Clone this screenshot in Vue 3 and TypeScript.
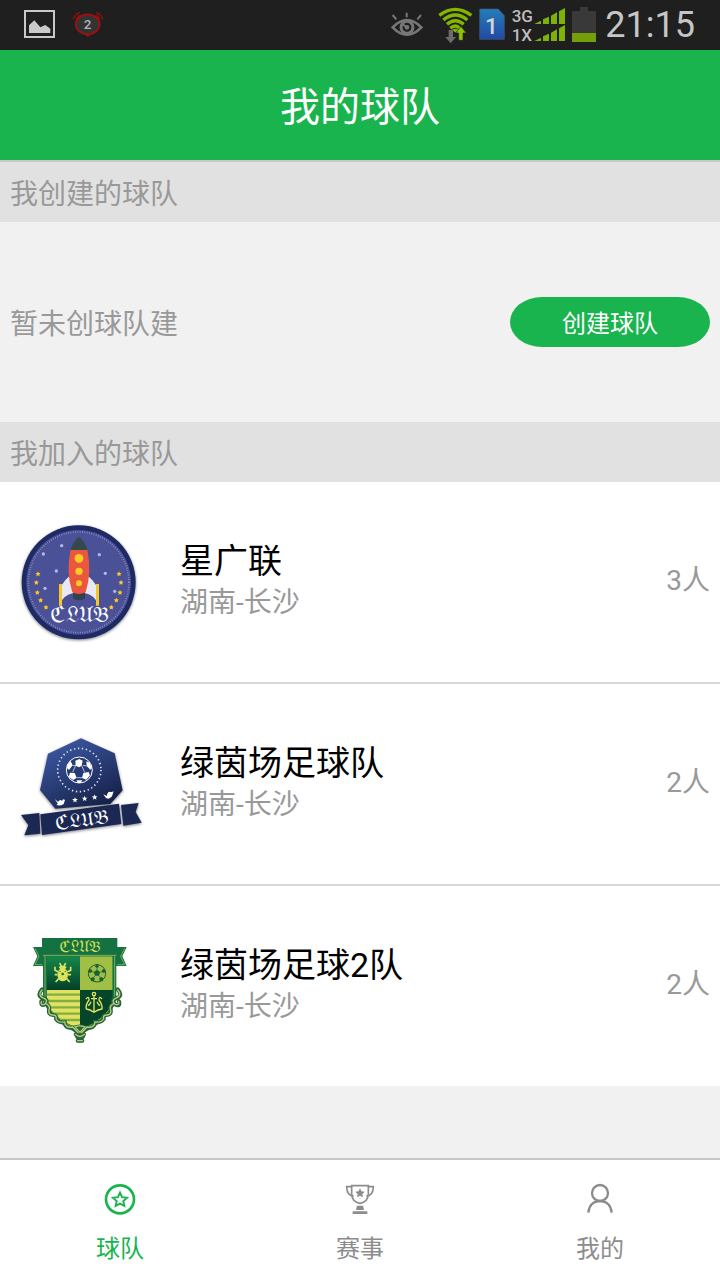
<script setup lang="ts">
import { ref } from 'vue'

interface Team {
  id: string
  name: string
  place: string
  members: number
}

const teams: Team[] = [
  { id: 'rocket', name: '星广联', place: '湖南-长沙', members: 3 },
  { id: 'heptagon', name: '绿茵场足球队', place: '湖南-长沙', members: 2 },
  { id: 'shield', name: '绿茵场足球2队', place: '湖南-长沙', members: 2 },
]

const tabs = [
  { id: 'team', label: '球队' },
  { id: 'match', label: '赛事' },
  { id: 'mine', label: '我的' },
]
const active = ref('team')

/** Five-pointed star as a polygon point list. */
function star(cx: number, cy: number, r: number, inner = 0.42): string {
  const pts: string[] = []
  for (let i = 0; i < 10; i++) {
    const a = ((i * 36 - 90) * Math.PI) / 180
    const d = i % 2 ? r * inner : r
    pts.push(`${(cx + d * Math.cos(a)).toFixed(1)},${(cy + d * Math.sin(a)).toFixed(1)}`)
  }
  return pts.join(' ')
}

/** Regular pentagon as a polygon point list. */
function pentagon(cx: number, cy: number, r: number, turn = 0): string {
  return [0, 1, 2, 3, 4]
    .map((i) => {
      const a = ((i * 72 - 90 + turn) * Math.PI) / 180
      return `${(cx + r * Math.cos(a)).toFixed(1)},${(cy + r * Math.sin(a)).toFixed(1)}`
    })
    .join(' ')
}

const rocketDots = [[155, 92], [100, 117], [268, 119], [139, 168], [286, 175], [105, 220], [314, 229]]
const rocketStars = [[84, 177], [79, 203], [82, 233], [92, 256], [108, 277], [327, 177], [333, 203], [330, 233], [319, 256], [304, 277]]
</script>

<template>
  <div class="page">
    <div class="status">
      <svg class="status-left" viewBox="60 0 260 150" aria-hidden="true">
        <rect x="75" y="33" width="87" height="78" fill="none" stroke="#c9c9c9" stroke-width="6" />
        <path d="M87 99V76L103 61L121 82L136 75L151 86V99Z" fill="#c9c9c9" />
        <ellipse cx="263" cy="73" rx="36" ry="30" fill="#333" stroke="#a90d0d" stroke-width="5" />
        <path d="M256 102L264 112L271 102Z" fill="#a90d0d" />
        <path d="M219 58Q226 43 239 37M289 37Q303 44 309 58M229 56L239 45M289 45L300 57" fill="none" stroke="#930f0f" stroke-width="4" />
        <text x="263" y="87" text-anchor="middle" font-size="40" font-weight="500" fill="#b5b5b5">2</text>
      </svg>
      <svg class="status-icons" viewBox="0 0 660 150" aria-hidden="true">
        <g fill="none" stroke="#777" stroke-width="6">
          <path d="M38 82Q81 38 124 82Q81 126 38 82Z" stroke-width="8" />
          <path d="M80 38V52M38 45L49 58M123 45L112 58" />
        </g>
        <circle cx="81" cy="82" r="18" fill="none" stroke="#777" stroke-width="9" />
        <path d="M66 71L80 82" stroke="#777" stroke-width="6" />
        <circle cx="81" cy="82" r="7" fill="#777" />
        <g fill="none" stroke="#84b600" stroke-width="10">
          <path d="M178 46Q226 10 274 46" />
          <path d="M190 60Q226 30 262 60" />
          <path d="M201 73Q226 51 251 73" />
          <path d="M211 85Q226 71 240 85" />
        </g>
        <path d="M217 89Q226 83 236 89L226 98Z" fill="#84b600" />
        <path d="M206 90H219V111H228L212 130L196 111H206Z" fill="#6c6c6c" />
        <path d="M236 121H249V99H259L243 79L227 99H236Z" fill="#8fc400" stroke="#1f1f1f" stroke-width="2" />
        <defs>
          <linearGradient id="sim" x1="0" y1="0" x2="0" y2="1">
            <stop offset="0" stop-color="#267db9" /><stop offset="1" stop-color="#2149a4" />
          </linearGradient>
        </defs>
        <path d="M299 27H355L373 47V118H299Z" fill="url(#sim)" stroke="#3d5b78" stroke-width="2" />
        <text x="334" y="102" text-anchor="middle" font-size="68" font-weight="500" fill="#d5d5d5">1</text>
        <g font-size="51" font-weight="500" fill="#bdbdbd">
          <text x="395" y="67">3G</text>
          <text x="395" y="122">1X</text>
        </g>
        <g fill="#7eb207">
          <path d="M463 72L483 62V72ZM489 72V58L507 50V72ZM513 72V47L531 37V72ZM537 72V34L555 24V72Z" />
          <path d="M463 123L483 113V123ZM489 123V109L507 101V123ZM513 123V98L531 88V123ZM537 123V85L555 75V123Z" />
        </g>
        <path d="M576 33H600V21H624V33H648V99H576Z" fill="#393939" />
        <rect x="576" y="99" width="72" height="27" fill="#759f08" />
      </svg>
      <time class="clock">21:15</time>
    </div>

    <header class="header"><h1>我的球队</h1></header>

    <main class="content">
      <h2 class="section">我创建的球队</h2>
      <div class="empty">
        <span>暂未创球队建</span>
        <button type="button" class="create">创建球队</button>
      </div>

      <h2 class="section">我加入的球队</h2>
      <ul class="teams">
        <li v-for="team in teams" :key="team.id" class="team">
          <svg v-if="team.id === 'rocket'" class="logo" viewBox="0 -9 420 420" role="img" aria-label="CLUB">
            <circle class="shade" cx="206" cy="202" r="171" fill="#1e2a63" />
            <circle cx="206" cy="202" r="157" fill="#4b5197" />
            <circle cx="206" cy="202" r="151" fill="none" stroke="#9ea2ce" stroke-width="5" stroke-dasharray="2 5" />
            <circle v-for="d in rocketDots" :key="d.join()" :cx="d[0]" :cy="d[1]" r="5" fill="#b5b8e6" />
            <polygon v-for="s in rocketStars" :key="s.join()" :points="star(s[0], s[1], 8, 0.5)" fill="#fdca24" />
            <path d="M178 184Q149 208 148 238V271Q160 239 190 234ZM235 184Q264 208 266 238V271Q254 239 224 234Z" fill="#e9e9f3" />
            <path d="M147 207H156V272H147ZM258 207H267V272H258Z" fill="#f5c72b" />
            <path d="M189 234H225V247Q225 256 207 256Q189 256 189 247Z" fill="#32424d" />
            <path d="M182 104H232Q246 172 227 232Q207 242 187 232Q167 172 182 104Z" fill="#eb573e" />
            <path d="M182 105Q188 79 207 65Q226 80 232 105Z" fill="#34494c" />
            <circle cx="207" cy="130" r="13" fill="#f7cc23" />
            <circle cx="207" cy="169" r="11" fill="#f7cc23" />
            <circle cx="207" cy="205" r="9" fill="#f7cc23" />
            <text class="fraktur" x="208" y="322" text-anchor="middle" font-size="66" fill="#fff">ℭ𝔏𝔘𝔅</text>
          </svg>

          <svg v-else-if="team.id === 'heptagon'" class="logo" viewBox="0 -33 420 420" role="img" aria-label="CLUB">
            <defs>
              <linearGradient id="navy" x1="0.2" y1="0" x2="0.8" y2="1">
                <stop offset="0" stop-color="#3d5aa6" /><stop offset="1" stop-color="#141e43" />
              </linearGradient>
            </defs>
            <g class="shade">
              <path d="M213 40L314 85L338 196L301 237L136 251L90 195L114 86Z" fill="url(#navy)" />
              <path d="M33 270L88 264L91 326L43 331L55 300ZM333 240L386 234L377 261L395 293L340 302Z" fill="#1a2853" />
              <path d="M91 268L327 236L334 297L96 330Z" fill="#1a2853" />
            </g>
            <circle cx="208" cy="135" r="65" fill="none" stroke="#dfe5f5" stroke-width="5" stroke-dasharray="4 8" />
            <circle cx="208" cy="135" r="39" fill="#263a75" stroke="#fff" stroke-width="3" />
            <g fill="#fff">
              <path d="M196 107L208 102L218 107L215 122L207 127L197 122ZM172 119L182 108L188 121L177 135L171 130ZM229 109L239 113L246 129L241 134L230 123ZM180 143L194 144L200 158L190 165L176 156ZM220 144L236 141L240 151L229 164L216 159ZM200 166L217 166L211 174H203Z" />
              <path d="M134 222L144 230Q151 221 156 228Q159 219 165 225L161 237Q147 246 139 238L144 236ZM280 208L291 213Q291 202 298 200Q305 203 311 199L306 214Q297 225 288 219Z" />
              <polygon :points="star(195, 225, 9)" /><polygon :points="star(224, 221, 9)" /><polygon :points="star(254, 217, 9)" />
            </g>
            <path d="M197 122L188 141M215 122L224 142M188 121L198 122M219 121L230 123M200 158L216 158" stroke="#fff" stroke-width="2" />
            <text class="fraktur" x="214" y="305" text-anchor="middle" font-size="60" fill="#fff" transform="rotate(-8 214 285)">ℭ𝔏𝔘𝔅</text>
          </svg>

          <svg v-else class="logo" viewBox="-30 -27 420 420" role="img" aria-label="CLUB">
            <defs>
              <linearGradient id="forest" x1="0" y1="0" x2="0" y2="1">
                <stop offset="0" stop-color="#16884a" /><stop offset="1" stop-color="#05402a" />
              </linearGradient>
              <clipPath id="shield"><path d="M80 94H278V229Q263 281 180 312Q97 281 80 229Z" /></clipPath>
            </defs>
            <path d="M39 66H320L307 94L320 123H285V85H74V123H39L52 94Z" fill="#147242" />
            <path d="M45 70L57 94L45 119H67M314 70L302 94L314 119H292" fill="none" stroke="#a5c959" stroke-width="2" />
            <path d="M66 39H292V93H289V223Q275 284 180 329Q84 284 69 223V93H66Z" fill="#147242" />
            <g clip-path="url(#shield)">
              <rect x="78" y="93" width="103" height="102" fill="url(#forest)" />
              <rect x="180" y="93" width="100" height="102" fill="#a2bf45" />
              <rect x="78" y="195" width="102" height="120" fill="#e0e264" />
              <path d="M78 209H180M78 228H180M78 247H180M78 266H180M78 285H180M78 304H180" stroke="#82ae3d" stroke-width="7" />
              <rect x="180" y="195" width="100" height="120" fill="#05462a" />
            </g>
            <path d="M69 91H289M75 93V222Q91 278 180 318Q269 278 284 222V93" fill="none" stroke="#bbcf57" stroke-width="2" />
            <g fill="none" stroke="#27643a" stroke-width="12" stroke-linecap="round">
              <path d="M66 193Q49 212 68 219Q88 225 75 238Q62 244 64 229M76 235Q90 241 87 255Q84 269 99 270Q111 269 108 282Q116 294 134 292Q135 311 158 308L174 323" />
              <path d="M293 193Q310 212 291 219Q271 225 284 238Q302 247 297 229M283 235Q269 241 272 255Q275 269 260 270Q248 269 251 282Q243 294 225 292Q224 311 201 308L185 323" />
              <path d="M164 309H196M167 328Q180 341 192 328M173 347H187" />
            </g>
            <path d="M160 304Q180 293 200 304L187 325L196 335L180 354L164 335L173 325Z" fill="#27643a" />
            <g fill="none" stroke="#b8cd78" stroke-width="4" stroke-linecap="round">
              <path d="M66 195Q52 210 68 218Q88 225 74 238Q61 242 64 229M76 235Q92 241 87 255Q84 269 99 270Q111 270 108 282Q116 294 134 291Q135 310 158 306L174 323" />
              <path d="M293 195Q307 210 291 218Q271 225 285 238Q299 242 296 229M283 235Q267 241 272 255Q275 269 260 270Q248 270 251 282Q243 294 225 291Q224 310 201 306L185 323" />
              <path d="M165 306Q180 299 195 306L180 322ZM166 328Q180 341 193 328M173 347H187" />
            </g>
            <g fill="#dce25c">
              <ellipse cx="128" cy="149" rx="16" ry="20" />
              <path d="M116 126Q128 117 140 126L134 134H122Z" />
            </g>
            <path d="M124 124L119 114M132 124L137 114M114 140L105 136V125M142 140L152 136V125M112 149H104M144 149H153M116 161L107 171M140 161L149 171" fill="none" stroke="#dce25c" stroke-width="5" />
            <circle cx="128" cy="147" r="4" fill="#1b7143" /><circle cx="120" cy="139" r="2" fill="#1b7143" /><circle cx="136" cy="139" r="2" fill="#1b7143" />
            <circle cx="231" cy="145" r="26" fill="#a2bf45" stroke="#17613a" stroke-width="3" />
            <g fill="#17613a">
              <polygon :points="pentagon(231, 144, 10)" />
              <polygon :points="pentagon(231, 123, 6, 36)" />
              <polygon :points="pentagon(211, 138, 6)" />
              <polygon :points="pentagon(251, 138, 6)" />
              <polygon :points="pentagon(218, 163, 7)" />
              <polygon :points="pentagon(244, 163, 7)" />
            </g>
            <path d="M231 125V135M213 139L222 142M249 139L240 142M219 161L225 152M243 161L237 152" stroke="#17613a" stroke-width="2" />
            <g fill="none" stroke="#e3e65e" stroke-width="4">
              <circle cx="222" cy="207" r="5" />
              <path d="M222 212V263M213 221H231M198 222Q207 211 207 225Q196 240 199 252Q210 253 222 262Q234 253 246 252Q248 240 237 225Q237 211 246 222M204 242Q210 238 213 230M240 242Q234 238 231 230" />
            </g>
            <text class="fraktur" x="181" y="81" text-anchor="middle" font-size="48" fill="#d8df55">ℭ𝔏𝔘𝔅</text>
          </svg>

          <div class="info">
            <h3>{{ team.name }}</h3>
            <p>{{ team.place }}</p>
          </div>
          <span class="members">{{ team.members }}人</span>
        </li>
      </ul>
    </main>

    <nav class="tabs">
      <button
        v-for="tab in tabs"
        :key="tab.id"
        type="button"
        class="tab"
        :class="{ active: active === tab.id }"
        @click="active = tab.id"
      >
        <svg v-if="tab.id === 'team'" viewBox="132 99 96 96" fill="none" stroke="currentColor" aria-hidden="true">
          <circle cx="180" cy="148" r="42" stroke-width="8" />
          <polygon :points="star(180, 150, 22, 0.48)" stroke-width="6" />
        </svg>
        <svg v-else-if="tab.id === 'match'" viewBox="852 99 96 96" fill="none" stroke="currentColor" aria-hidden="true">
          <path d="M875 107H925V132Q924 156 900 160Q876 156 875 132Z" stroke-width="5" />
          <path d="M875 110H860Q860 136 881 138M925 110H940Q940 136 919 138" stroke-width="5" />
          <polygon :points="star(900, 130, 15, 0.5)" fill="currentColor" stroke="none" />
          <path d="M891 167H909L912 180H888ZM878 184H922V192H878Z" fill="currentColor" stroke="none" />
        </svg>
        <svg v-else viewBox="132 99 96 96" fill="none" stroke="currentColor" stroke-width="7" aria-hidden="true">
          <circle cx="180" cy="129" r="24" />
          <path d="M145 188C147 166 160 153 180 153C200 153 213 166 215 188" />
        </svg>
        <span>{{ tab.label }}</span>
      </button>
    </nav>
  </div>
</template>

<style>
body {
  margin: 0;
}
</style>

<style scoped>
.page {
  display: flex;
  flex-direction: column;
  min-height: 100vh;
  background: #f1f1f1;
  color: #999;
  font-family: Roboto, "Noto Sans CJK SC", sans-serif;
  font-size: 28px;
}
h1,
h2,
h3,
p,
ul {
  margin: 0;
  padding: 0;
  font-weight: 400;
}
button {
  border: 0;
  padding: 0;
  font-family: inherit;
  font-size: 24px;
  cursor: pointer;
}
.status {
  display: flex;
  align-items: center;
  height: 50px;
  padding: 0 25px 0 20px;
  background: #1f1f1f;
}
.status-left {
  height: 50px;
}
.status-icons {
  height: 50px;
  margin-left: auto;
}
.clock {
  margin-left: 5px;
  color: #c6c6c6;
  font-size: 36px;
  line-height: 48px;
}
.header {
  padding-top: 6px;
  border-bottom: 2px solid #c8c8c8;
  background: #1ab44f;
  color: #fff;
  text-align: center;
}
.header h1 {
  font-size: 40px;
  line-height: 104px;
}
.content {
  flex: 1;
}
.section {
  padding: 6px 10px 0;
  background: #e1e1e1;
  font-size: 28px;
  line-height: 54px;
}
.empty {
  display: flex;
  align-items: center;
  justify-content: space-between;
  height: 200px;
  padding: 0 10px;
}
.create {
  width: 200px;
  height: 50px;
  padding-bottom: 2px;
  border-radius: 32px / 25px;
  background: #1ab44f;
  color: #fff;
}
.teams {
  list-style: none;
}
.team {
  display: flex;
  align-items: center;
  gap: 30px;
  height: 200px;
  padding: 0 10px;
  background: #fff;
}
.team + .team {
  border-top: 2px solid #d8d8d8;
}
.logo {
  flex: none;
  width: 140px;
  height: 140px;
}
.shade {
  filter: drop-shadow(0 3px 5px rgba(0, 0, 0, 0.5));
}
.fraktur {
  font-family: "DejaVu Sans", "DejaVu Serif", serif;
}
.info {
  flex: 1;
  line-height: 42px;
}
.info h3 {
  color: #000;
  font-size: 34px;
}
.members {
  padding-bottom: 8px;
}
.tabs {
  display: flex;
  border-top: 2px solid #c8c8c8;
  background: #fff;
}
.tab {
  display: flex;
  flex: 1;
  flex-direction: column;
  align-items: center;
  gap: 18px;
  padding: 23px 0 15px;
  background: none;
  color: #8c8c8c;
  line-height: 32px;
}
.tab svg {
  width: 32px;
  height: 32px;
}
.tab.active {
  color: #1ab44f;
}
</style>
